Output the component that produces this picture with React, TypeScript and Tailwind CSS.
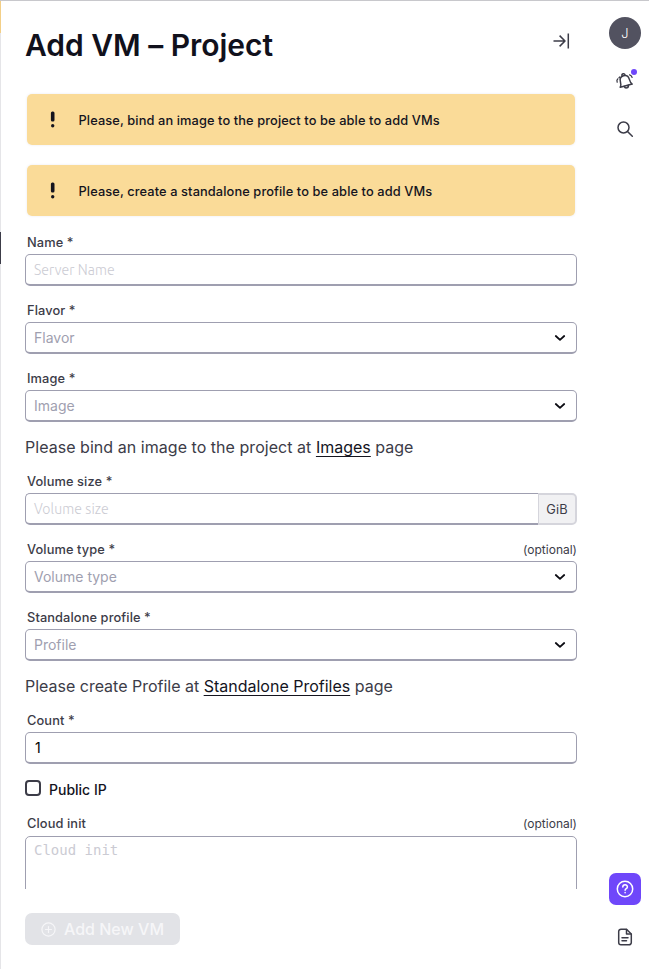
import React from "react";

const box =
  "flex h-8 w-full items-center rounded-[5px] border border-b-2 border-[#9f9fb0] bg-white";

function Alert({ children }: { children: React.ReactNode }) {
  return (
    <div className="mx-0.5 flex h-[51px] items-center rounded-[5px] bg-[#fadb98] pl-[23px] shadow-[0_0_2px_1px_#f6f6f9]">
      <svg width="6" height="17" viewBox="0 0 6 17" fill="#14141e">
        <rect x="0.9" y="0.4" width="3.6" height="10" rx="1.5" />
        <circle cx="2.7" cy="14.8" r="1.7" />
      </svg>
      <span className="ml-[22.5px] pt-0.5 text-[12.8px] leading-5 font-medium tracking-[0.11px] text-[#14141e]">
        {children}
      </span>
    </div>
  );
}

function Field({
  label,
  optional,
  children,
}: {
  label: string;
  optional?: boolean;
  children: React.ReactNode;
}) {
  return (
    <div>
      <div className="mb-1 flex h-4 items-center justify-between pl-0.5 text-[12.8px] leading-4 text-[#3c3c48]">
        <span className="pt-px font-medium tracking-[0.11px]">{label}</span>
        {optional && <span className="pt-px text-[12px]">(optional)</span>}
      </div>
      {children}
    </div>
  );
}

function Select({ placeholder }: { placeholder: string }) {
  return (
    <div className={box + " justify-between pr-[10px] pl-2"}>
      <span className="text-[14px] text-[#9f9fb0]">{placeholder}</span>
      <svg width="12" height="8" viewBox="0 0 12 8" fill="none" stroke="#0b0b12" strokeWidth="1.8" strokeLinecap="round" strokeLinejoin="round">
        <path d="M1.8 2 6 5.8 10.2 2" />
      </svg>
    </div>
  );
}

function Note({ children }: { children: React.ReactNode }) {
  return (
    <p className="mt-[13px] mb-[14px] h-6 text-[16px] leading-6 whitespace-nowrap text-[#3c3c48]">
      {children}
    </p>
  );
}

function NoteLink({ children }: { children: React.ReactNode }) {
  return (
    <a className="text-[#14141e] underline decoration-1 underline-offset-[3px]">{children}</a>
  );
}

const iconProps = {
  fill: "none",
  stroke: "#3c3c48",
  strokeWidth: 1.5,
  strokeLinecap: "round",
  strokeLinejoin: "round",
} as const;

export default function App() {
  return (
    <div className="flex h-[969px] w-[649px] overflow-hidden border-t border-[#c8c8cc] bg-white font-['Inter','Liberation_Sans',sans-serif]">
      <div className="flex w-px shrink-0 flex-col bg-[#e5e5e8]">
        <div className="h-8 bg-[#f3cf87]" />
        <div className="mt-[199px] h-8 bg-[#3c3c48]" />
      </div>

      <main className="ml-6 flex w-[552px] shrink-0 flex-col">
        <header className="mt-6 flex h-10 items-center justify-between">
          <h1 className="text-[30px] leading-10 font-semibold tracking-[-0.03px] text-[#11111c]">
            Add VM – Project
          </h1>
          <svg className="mr-[6px] mb-2" width="18" height="16" viewBox="0 0 18 16" {...iconProps} strokeLinecap="butt">
            <path d="M.5 8H12M6.600 2.600 12 8l-5.400 5.400M15.300.5v15" />
          </svg>
        </header>

        <div className="mt-[29px] flex flex-col gap-5">
          <Alert>Please, bind an image to the project to be able to add VMs</Alert>
          <Alert>Please, create a standalone profile to be able to add VMs</Alert>
        </div>

        <div className="mt-[10px] h-[663px] overflow-hidden pt-2">
          <div className="flex flex-col gap-4">
            <Field label="Name *">
              <div className={box + " pt-0.5 pl-2 font-['Ubuntu','Noto_Sans',sans-serif] text-[14px] font-light tracking-[0.1px] text-[#cbcbd3]"}>
                Server Name
              </div>
            </Field>
            <Field label="Flavor *">
              <Select placeholder="Flavor" />
            </Field>
            <Field label="Image *">
              <Select placeholder="Image" />
            </Field>
          </div>
          <Note>
            <span className="tracking-[0.04px]">Please bind an image to the project at </span>
            <NoteLink>Images</NoteLink> page
          </Note>
          <div className="flex flex-col gap-4">
            <Field label="Volume size *">
              <div className="flex">
                <div className="flex h-8 flex-1 items-center rounded-l-[5px] border border-r-0 border-b-2 border-[#9f9fb0] pt-0.5 pl-2 font-['Ubuntu','Noto_Sans',sans-serif] text-[14px] font-light tracking-[0.1px] text-[#cbcbd3]">
                  Volume size
                </div>
                <div className="flex h-8 w-[39px] items-center justify-center rounded-r-[5px] border border-t-2 border-r-2 border-b-2 border-[#d5d5dc] bg-[#f1f1f3] pt-px text-[12.8px] tracking-[0.11px] text-[#3c3c48]">
                  GiB
                </div>
              </div>
            </Field>
            <Field label="Volume type *" optional>
              <Select placeholder="Volume type" />
            </Field>
            <Field label="Standalone profile *">
              <Select placeholder="Profile" />
            </Field>
          </div>
          <Note>
            <span className="tracking-[-0.01px]">Please create Profile at </span>
            <NoteLink>Standalone Profiles</NoteLink> page
          </Note>
          <Field label="Count *">
            <div className={box + " pl-[9px] text-[14px] text-black"}>1</div>
          </Field>
          <div className="mt-[15px] mb-4 flex h-5 items-center">
            <span className="mb-[3px] size-4 rounded-[4px] border-2 border-[#3c3c48]" />
            <span className="ml-2 text-[14px] font-medium text-[#14141e]">Public IP</span>
          </div>
          <Field label="Cloud init" optional>
            <div className="mt-[5px] h-20 rounded-[5px] border border-[#9f9fb0] pt-1 pl-2 font-['DejaVu_Sans_Mono',monospace] text-[14px] leading-[18px] text-[#cbcbd3]">
              Cloud init
            </div>
          </Field>
        </div>

        <button className="mt-6 flex h-8 w-[155px] items-center rounded-[7px] bg-[#e2e3e7] pl-4 text-[16px] font-medium text-[#f6f6f8]">
          <svg className="mr-2" width="15" height="15" viewBox="0 0 15 15" fill="none" stroke="currentColor" strokeWidth="1.2" strokeLinecap="round">
            <circle cx="7.5" cy="7.5" r="6.6" />
            <path d="M7.5 4.5v6M4.5 7.5h6" />
          </svg>
          <span className="whitespace-nowrap">Add New VM</span>
        </button>
      </main>

      <aside className="ml-8 flex w-8 shrink-0 flex-col items-center">
        <div className="mt-4 flex size-8 items-center justify-center rounded-full bg-[#525260] pt-0.5 text-[12.8px] font-light text-white">
          J
        </div>
        <div className="relative mt-5 flex h-6 w-8 items-center justify-center">
          <svg width="20" height="20" viewBox="0 0 20 20" {...iconProps}>
            <g transform="rotate(-15 10 10)">
              <path d="M3.800 14.800c1.300-1.300 1.600-3 1.600-5.500 0-3 1.900-4.800 4.600-4.800s4.600 1.800 4.600 4.800c0 2.500.3 4.200 1.600 5.500Z" />
              <path d="M8.400 4.500c0-2.600 3.200-2.600 3.200 0M7.800 15c.4 2.700 4 2.700 4.400 0" />
            </g>
            <path d="M2.200 11.200c-.5-1.200-.2-2.500.5-3.200M4 6.800l.8-.8M14.600 3.800c1.300.5 2.200 1.300 2.500 2.500" strokeWidth="1.3" />
          </svg>
          <span className="absolute top-0 right-[4px] size-1.5 rounded-full bg-[#6f47fa]" />
        </div>
        <svg className="mt-[27px]" width="18" height="18" viewBox="0 0 18 18" {...iconProps}>
          <circle cx="7.500" cy="7.500" r="5.500" />
          <path d="m11.500 11.500 4.800 4.800" />
        </svg>
        <div className="mt-[735px] flex size-8 shrink-0 items-center justify-center rounded-[7px] bg-[#6f47fa]">
          <svg width="18" height="18" viewBox="0 0 18 18" {...iconProps} stroke="#fff">
            <circle cx="9" cy="9" r="7.700" />
            <path d="M6.800 7.100c0-3 4.600-3 4.600-.2 0 1.700-2.300 1.700-2.300 3.400M9.100 12.600v.1" />
          </svg>
        </div>
        <svg className="mt-[23px] shrink-0" width="16" height="18" viewBox="0 0 16 18" {...iconProps}>
          <path d="M9.500 1.200H4A2.300 2.300 0 0 0 1.700 3.500v11A2.300 2.300 0 0 0 4 16.800h8a2.300 2.300 0 0 0 2.300-2.300V6Z" />
          <path d="M9.500 1.500V6h4.500M5 9.800h6M5 12.800h4.500" />
        </svg>
      </aside>
    </div>
  );
}
